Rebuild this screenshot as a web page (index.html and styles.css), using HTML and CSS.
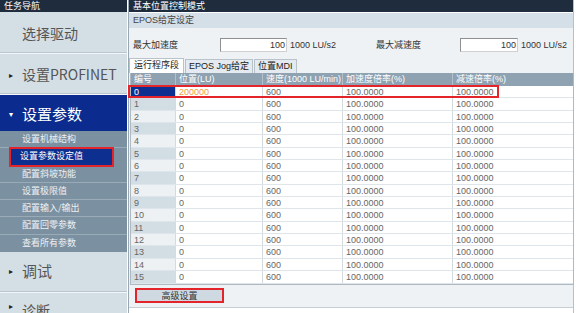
FILE: index.html
```html
<!DOCTYPE html>
<html lang="zh">
<head>
<meta charset="utf-8">
<link rel="stylesheet" href="styles.css">
</head>
<body>
<div class="page">
  <aside class="sidebar">
    <div class="sb-head">任务导航</div>
    <div class="sb-sec sb-plain">选择驱动</div>
    <div class="sb-sec"><span class="arrow">&#9656;</span>设置PROFINET</div>
    <div class="sb-sec sb-active"><span class="arrow">&#9662;</span>设置参数</div>
    <ul class="sb-items">
      <li>设置机械结构</li>
      <li class="sel">设置参数设定值</li>
      <li>配置斜坡功能</li>
      <li>设置极限值</li>
      <li>配置输入/输出</li>
      <li>配置回零参数</li>
      <li>查看所有参数</li>
    </ul>
    <div class="sb-sec sb-debug"><span class="arrow">&#9656;</span>调试</div>
    <div class="sb-sec sb-diag"><span class="arrow">&#9656;</span>诊断</div>
  </aside>
  <main class="main">
    <div class="m-head">基本位置控制模式</div>
    <div class="m-sub">EPOS给定设定</div>
    <div class="m-body">
      <div class="inputs">
        <div class="field f1">
          <span class="lbl">最大加速度</span>
          <span class="box">100</span>
          <span class="unit">1000 LU/s2</span>
        </div>
        <div class="field f2">
          <span class="lbl">最大减速度</span>
          <span class="box">100</span>
          <span class="unit">1000 LU/s2</span>
        </div>
      </div>
      <div class="tabs">
        <span class="tab active">运行程序段</span>
        <span class="tab">EPOS Jog给定</span>
        <span class="tab">位置MDI</span>
      </div>
      <div class="table" id="tbl">
        <div class="row hdr">
          <span>编号</span><span>位置(LU)</span><span>速度(1000 LU/min)</span><span>加速度倍率(%)</span><span>减速倍率(%)</span>
        </div>
      </div>
      <div class="bottom">
        <span class="btn">高级设置</span>
      </div>
    </div>
  </main>
</div>
<script src="app.js"></script>
</body>
</html>
```
FILE: app.js
```js
(function () {
  var t = document.getElementById('tbl');
  for (var i = 0; i < 16; i++) {
    var r = document.createElement('div');
    r.className = 'row ' + (i % 2 ? 'odd' : 'even') + (i === 0 ? ' first' : '');
    var pos = i === 0 ? '200000' : '0';
    r.innerHTML = '<span class="num">' + i + '</span><span class="pos">' + pos +
      '</span><span>600</span><span>100.0000</span><span>100.0000</span>';
    t.appendChild(r);
  }
  var hl = document.createElement('div');
  hl.className = 'hl';
  t.appendChild(hl);
})();
```
FILE: styles.css
```css
html, body { margin: 0; padding: 0; background: #fff; }
body { width: 576px; height: 313px; overflow: hidden; font-family: "Liberation Sans", "Noto Sans CJK SC", sans-serif; }
.page { display: flex; height: 313px; overflow: hidden; }

.sidebar { width: 127px; flex: none; background: #d4dee5; display: flex; flex-direction: column; border-right: 1px solid #fff; overflow: hidden; }
.sb-head { height: 12px; flex: none; background: #1e2c3e; color: #fff; font-size: 9px; line-height: 12px; padding-left: 4px; font-family: "Noto Sans CJK SC", sans-serif; }
.sb-sec { height: 40px; flex: none; display: flex; align-items: center; padding-left: 9px; font-size: 14px; color: #555; border-bottom: 1px solid #f4f7f9; box-shadow: inset 0 -1px 0 #b9c6cf; font-family: "Noto Sans CJK SC", sans-serif; }
.sb-plain { padding-left: 22px; height: 41px; }
.arrow { width: 13px; font-size: 8px; color: #222; }
.sb-active { background: #0b2c8e; color: #fff; height: 36px; border-bottom: 0; box-shadow: none; font-size: 15px; }
.sb-active .arrow { color: #fff; }
.sb-items { list-style: none; margin: 0; padding: 0; background: #7b90a0; flex: none; }
.sb-items li { height: 16.3px; line-height: 16px; padding-left: 22px; font-size: 9px; color: #eef1f4; border-bottom: 1px solid #9aabb8; font-family: "Noto Sans CJK SC", sans-serif; }
.sb-items li:last-child { border-bottom: 0; height: 17px; }
.sb-items li.sel { background: #0d2f8f; color: #fff; margin: 0 14px 0 10px; padding-left: 10px; outline: 2px solid #e3242b; outline-offset: -1px; }
.sb-debug { height: 41px; font-size: 15px; padding-bottom: 3px; box-sizing: border-box; }
.sb-diag { border-bottom: 0; box-shadow: none; align-items: flex-start; padding-top: 7px; font-size: 14px; }

.main { width: 444px; flex: none; display: flex; flex-direction: column; border-left: 1px solid #9aa8b3; border-right: 1px solid #b5c0c8; font-family: "Liberation Sans", "Noto Sans CJK SC", sans-serif; }
.m-head { height: 12px; background: #1e2c3e; color: #fff; font-size: 9px; line-height: 12px; padding-left: 4px; font-family: "Noto Sans CJK SC", sans-serif; }
.m-sub { height: 15px; margin-top: 1px; background: #d5dfe7; color: #444; font-size: 9px; line-height: 15px; padding-left: 4px; }
.m-body { background: #eef2f5; display: flex; flex-direction: column; height: 279px; border-bottom: 1px solid #c5ced5; }

.inputs { display: flex; height: 29px; align-items: center; padding-top: 2px; }
.field { display: flex; align-items: center; font-size: 9px; color: #333; }
.f1 { width: 247px; }
.f1 .lbl { width: 87px; padding-left: 4px; }
.f2 .lbl { width: 84px; }
.box { width: 64px; height: 12px; background: #fff; border: 1px solid #8f8f8f; border-right-color: #d0d0d0; border-bottom-color: #d0d0d0; text-align: right; line-height: 12px; padding-right: 1px; color: #333; }
.unit { margin-left: 3px; color: #333; }
.f2 .box { width: 55px; }

.tabs { display: flex; height: 14px; padding-left: 0; align-items: flex-end; }
.tab { height: 13px; line-height: 13px; font-size: 9px; color: #222; padding: 0 3px; border: 1px solid #b8c2ca; border-bottom: 0; background: #e4eaef; margin-right: 1px; }
.tab.active { background: #fff; height: 14px; padding: 0 4px; }

.table { position: relative; display: flex; flex-direction: column; border: 1px solid #aeb9c2; border-top: 0; margin-left: 1px; width: 442px; background: #fff; }
.row { display: grid; grid-template-columns: 45px 87px 80px 110px 1fr; height: 12.35px; font-size: 9px; line-height: 12px; color: #666; border-bottom: 1px solid #dfe6eb; box-sizing: border-box; }
.row span { padding-left: 3px; border-right: 1px solid #d3dbe1; white-space: nowrap; overflow: hidden; }
.row span:last-child { border-right: 0; }
.row.hdr { height: 13px; line-height: 13px; background: #8ea2b2; color: #fff; border-bottom: 0; }
.row.hdr span { border-right-color: #b2c0cb; font-size: 9px; }
.row.odd .num { background: #d3dde4; }
.row.even .num { background: #edf1f4; }
.row:last-of-type { border-bottom: 0; }
.row.first .num { background: #0d2f8f; color: #fff; }
.row.first .pos { color: #f39a3a; }
.hl { position: absolute; left: -3px; top: 12px; width: 371px; height: 13px; border: 2px solid #e3242b; box-sizing: border-box; }

.bottom { height: 21px; display: flex; align-items: center; padding-left: 6px; }
.btn { width: 85px; height: 11px; line-height: 11px; text-align: center; font-size: 9px; color: #333; background: #cfd9e2; border: 2px solid #e3242b; font-family: "Noto Sans CJK SC", sans-serif; }
```
